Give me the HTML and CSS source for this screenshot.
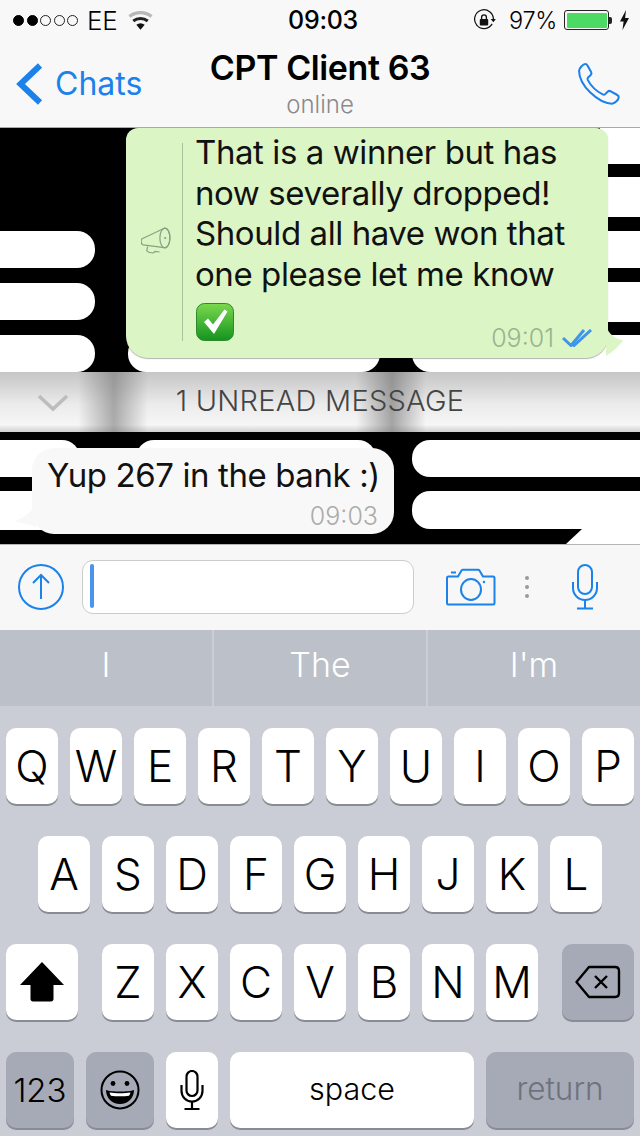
FILE: index.html
```html
<!DOCTYPE html>
<html lang="en">
<head>
<meta charset="utf-8">
<title>CPT Client 63</title>
<link rel="stylesheet" href="styles.css">
</head>
<body>
<div class="phone">
  <header class="top">
    <div class="status">
      <div class="status-left">
        <span class="signal"><i class="dot on"></i><i class="dot on"></i><i class="dot"></i><i class="dot"></i><i class="dot"></i></span>
        <span class="carrier">EE</span>
        <svg class="wifi" viewBox="0 0 24 18"><path d="M12 17l-3.600-4.400a6 6 0 0 1 7.200 0z" fill="#111"/><path d="M6.600 10.400a8.600 8.600 0 0 1 10.800 0l1.600-2a11.600 11.600 0 0 0-14 0z" fill="#222"/><path d="M3.400 6.600a13.800 13.800 0 0 1 17.200 0l1.700-2.100a16.600 16.600 0 0 0-20.600 0z" fill="#b8b8b8"/></svg>
      </div>
      <div class="clock">09:03</div>
      <div class="status-right">
        <svg class="rotlock" viewBox="0 0 24 24"><path d="M20.500 15.500A9.800 9.800 0 1 1 21.800 11" fill="none" stroke="#111" stroke-width="1.300"/><path d="M19 10.500h5.400l-2.700 3.400z" fill="#111"/><rect x="7.600" y="10.500" width="8.800" height="6.800" rx="1" fill="#111"/><path d="M9.500 10.500V8.600a2.500 2.500 0 0 1 5 0v1.900" fill="none" stroke="#111" stroke-width="1.400"/></svg>
        <span class="pct">97%</span>
        <span class="battery"><span class="battery-fill"></span></span>
        <span class="battery-cap"></span>
        <svg class="bolt" viewBox="0 0 10 20"><path d="M6.500 0L0.500 11.500h3.600L3 20l6.500-12H5.600z" fill="#111"/></svg>
      </div>
    </div>
    <nav class="nav">
      <div class="back">
        <svg class="chevron" viewBox="0 0 26 42"><path d="M23.500 2.500L4 21l19.500 18.500" fill="none" stroke="#1a82ea" stroke-width="6"/></svg>
        <span class="back-label">Chats</span>
      </div>
      <div class="title">
        <div class="name">CPT Client 63</div>
        <div class="presence">online</div>
      </div>
      <div class="call">
        <svg class="phone-icon" viewBox="0 0 44 42"><path d="M3 8.500c0-2.500 4-6.500 6-6.500 1.200 0 1.800.6 2.500 1.800l3.300 6c.7 1.300.3 2.200-.6 3.100l-2.400 2.300c-.7.700-.7 1.500-.2 2.500 2.800 5.200 8.500 11 14.500 14 1 .5 1.800.4 2.500-.3l2.300-2.300c.9-.9 1.900-1.200 3.100-.5l6 3.400c1.300.7 1.800 1.400 1.800 2.400 0 2.200-3.800 6.300-6.700 6.300C21.700 40.200 3 23 3 8.500z" fill="none" stroke="#1a82ea" stroke-width="2"/></svg>
      </div>
    </nav>
  </header>

  <main class="chat">
    <svg class="wallpaper" viewBox="0 128 640 416" preserveAspectRatio="none">
      <rect x="0" y="128" width="640" height="416" fill="#000"/>
      <g fill="#fff">
        <rect x="-40" y="231" width="135" height="37" rx="18"/>
        <rect x="-40" y="283" width="135" height="37" rx="18"/>
        <rect x="-40" y="335" width="135" height="37" rx="18"/>
        <rect x="128" y="335" width="252" height="37" rx="18"/>
        <rect x="412" y="335" width="300" height="37" rx="18"/>
        <rect x="600" y="128" width="100" height="36"/>
        <rect x="600" y="177" width="100" height="40"/>
        <rect x="600" y="231" width="100" height="37"/>
        <rect x="600" y="282" width="100" height="40"/>
        <rect x="-40" y="440" width="120" height="37" rx="18"/>
        <rect x="136" y="440" width="240" height="37" rx="18"/>
        <rect x="-40" y="491" width="400" height="39" rx="18"/>
        <rect x="412" y="440" width="300" height="37" rx="18"/>
        <rect x="412" y="491" width="300" height="38" rx="18"/>
        <path d="M582 529H640V544H566z"/>
      </g>
    </svg>

    <div class="msg-out">
      <div class="fwd">
        <svg class="megaphone" viewBox="1 1 27 25"><g fill="none" stroke="#8aa083" stroke-width="1.100"><path d="M2 11.500L22 2c3-.6 5 3.500 5 8.500s-2 9.500-5 9l-19-2.500C.8 16.500.8 12.500 2 11.500z"/><ellipse cx="22.500" cy="10.800" rx="4.500" ry="8.800"/><path d="M7 18.500l-.8 3.500c-.2 1.300 5.500 3 6.500 1.800l1-1 4 .6"/></g><circle cx="22.800" cy="10.800" r="1" fill="#8aa083"/></svg>
      </div>
      <div class="msg-body">
        <p class="msg-text">That is a winner but has<br>now severally dropped!<br>Should all have won that<br>one please let me know</p>
        <div class="msg-foot">
          <svg class="check-emoji" viewBox="0 0 38 38"><defs><linearGradient id="g" x1="0" y1="0" x2="0" y2="1"><stop offset="0" stop-color="#7ad94e"/><stop offset="1" stop-color="#15931f"/></linearGradient></defs><rect x="0.500" y="0.500" width="37" height="37" rx="8" fill="url(#g)" stroke="#2c8a2a"/><path d="M8 19l4-3.500 5 6L28.500 6.500l3 2L18 31z" fill="#fff"/></svg>
          <div class="meta">
            <span class="time-out">09:01</span>
            <svg class="ticks" viewBox="0 0 30 18"><path d="M1 9l8 7.500L22 1" fill="none" stroke="#3e95ea" stroke-width="3"/><path d="M10 14.500l2 2L29 1" fill="none" stroke="#3e95ea" stroke-width="3"/></svg>
          </div>
        </div>
      </div>
      <svg class="tail-out" viewBox="0 0 20 34"><path d="M0 0c1 7 6 14 17 16.500C14 21 7 28 0 32z" fill="#dcf5c5"/></svg>
    </div>

    <div class="unread">
      <svg class="unread-chevron" viewBox="0 0 32 18"><path d="M2 2l14 13L30 2" fill="none" stroke="#bdbdbd" stroke-width="3.600"/></svg>
      <span class="unread-label">1 UNREAD MESSAGE</span>
    </div>

    <div class="msg-in">
      <p class="in-text">Yup 267 in the bank :)</p>
      <div class="in-time">09:03</div>
      <svg class="tail-in" viewBox="0 0 22 26"><path d="M22 0C20 5 11 14 0 17c6 2 15 2 22 7z" fill="#f8f8f8"/></svg>
    </div>
  </main>

  <section class="composer">
    <svg class="attach" viewBox="0 0 46 46"><circle cx="23" cy="23" r="22" fill="none" stroke="#1a82ea" stroke-width="2"/><path d="M23 35V11M15 19l8-8 8 8" fill="none" stroke="#1a82ea" stroke-width="2"/></svg>
    <div class="input"><span class="caret"></span></div>
    <svg class="camera" viewBox="0 0 50 38"><g fill="none" stroke="#1a82ea" stroke-width="2"><path d="M1 10c0-1 .6-1.500 1.500-1.500H12l3.500-6c.4-.6.800-.8 1.500-.8h15c.7 0 1.200.2 1.500.8l3.500 6h10c1 0 1.500.5 1.500 1.500v25c0 1-.5 1.500-1.500 1.500h-45C1.500 36.500 1 36 1 35z"/><ellipse cx="25" cy="21.500" rx="10" ry="10.500"/></g><path d="M5 4.500h5" stroke="#1a82ea" stroke-width="2"/><circle cx="38" cy="14" r="1.200" fill="#1a82ea"/></svg>
    <div class="dots"><i></i><i></i><i></i></div>
    <svg class="mic-blue" viewBox="0 0 28 46"><g fill="none" stroke="#1a82ea" stroke-width="2"><rect x="7" y="1" width="14" height="29" rx="7"/><path d="M2 18v6a12 12 0 0 0 24 0v-6"/><path d="M14 36v8M6 44.500h16"/></g></svg>
  </section>

  <section class="suggest">
    <div class="sug">I</div>
    <div class="sug">The</div>
    <div class="sug">I'm</div>
  </section>

  <section class="keyboard">
    <div class="row">
      <div class="key">Q</div><div class="key">W</div><div class="key">E</div><div class="key">R</div><div class="key">T</div><div class="key">Y</div><div class="key">U</div><div class="key">I</div><div class="key">O</div><div class="key">P</div>
    </div>
    <div class="row">
      <div class="key">A</div><div class="key">S</div><div class="key">D</div><div class="key">F</div><div class="key">G</div><div class="key">H</div><div class="key">J</div><div class="key">K</div><div class="key">L</div>
    </div>
    <div class="row row-wide">
      <div class="key key-side"><svg class="shift" viewBox="0 0 44 40"><path d="M22 0L44 23H33.500V37c0 1.500-1 2.500-2.500 2.500H13c-1.500 0-2.500-1-2.500-2.500V23H0z" fill="#000"/></svg></div>
      <div class="letters">
        <div class="key">Z</div><div class="key">X</div><div class="key">C</div><div class="key">V</div><div class="key">B</div><div class="key">N</div><div class="key">M</div>
      </div>
      <div class="key key-side key-dark"><svg class="delete" viewBox="0 0 46 34"><path d="M14 2h26c2.500 0 4 1.500 4 4v22c0 2.500-1.500 4-4 4H14L1.500 17z" fill="none" stroke="#000" stroke-width="2.400" stroke-linejoin="round"/><path d="M20 11l12 12M32 11L20 23" stroke="#000" stroke-width="2.400"/></svg></div>
    </div>
    <div class="row row-bottom">
      <div class="key key-dark key-num">123</div>
      <div class="key key-dark key-emoji"><svg class="smile" viewBox="0 0 40 40"><circle cx="20" cy="20" r="18.500" fill="none" stroke="#000" stroke-width="2"/><circle cx="13" cy="13.500" r="2.400" fill="#000"/><circle cx="27" cy="13.500" r="2.400" fill="#000"/><path d="M6 20c5 2 23 2 28 0 0 8-6 14-14 14S6 28 6 20z" fill="#000"/><path d="M9.500 22.500c6 1 15 1 21 0-.5 1.500-1 2.500-1.500 3.200-5 .8-13 .8-18 0-.7-.8-1.200-2-1.500-3.200z" fill="#fff"/></svg></div>
      <div class="key"><svg class="mic-black" viewBox="0 0 24 40"><g fill="none" stroke="#000" stroke-width="2.200"><rect x="6.500" y="1" width="11" height="25" rx="5.500"/><path d="M1.500 15v6a10.500 10.500 0 0 0 21 0v-6"/><path d="M12 32v6M4.500 39h15"/></g></svg></div>
      <div class="key key-space"><span class="key-word">space</span></div>
      <div class="key key-dark key-return"><span class="key-word">return</span></div>
    </div>
  </section>
</div>
</body>
</html>
```

FILE: styles.css
```css
* { box-sizing: border-box; }
html, body { margin: 0; padding: 0; }
body { width: 640px; height: 1136px; overflow: hidden; font-family: Inter, "Liberation Sans", sans-serif; color: #000; }
p { margin: 0; }
.phone { width: 640px; height: 1136px; display: flex; flex-direction: column; }

.top { height: 128px; background: #f8f8f8; border-bottom: 1px solid #a9a9a9; flex: none; }
.status { height: 40px; display: grid; grid-template-columns: 1fr auto 1fr; align-items: center; font-size: 25px; letter-spacing: -0.3px; }
.status-left { display: flex; align-items: center; padding-left: 13px; }
.signal { display: flex; gap: 2.500px; margin-right: 9px; }
.dot { width: 11px; height: 11px; border-radius: 50%; border: 1px solid #222; }
.dot.on { background: #000; border-color: #000; }
.carrier { margin-right: 9px; font-size: 26px; font-weight: 300; }
.wifi { width: 29px; height: 21px; }
.clock { font-weight: 500; font-size: 25px; letter-spacing: -0.3px; padding-left: 6px; }
.status-right { display: flex; align-items: center; justify-content: flex-end; padding-right: 10px; }
.rotlock { width: 24px; height: 23px; margin-right: 13px; }
.pct { margin-right: 7px; font-size: 23.500px; font-weight: 300; }
.battery { width: 45px; height: 20px; border: 1px solid #222; border-radius: 3px; padding: 1.500px; display: flex; }
.battery-fill { flex: 1; background: #4cd964; border-radius: 1px; }
.battery-cap { width: 3px; height: 7px; background: #222; border-radius: 0 2px 2px 0; margin-right: 7px; }
.bolt { width: 11px; height: 20px; }

.nav { height: 87px; display: grid; grid-template-columns: 1fr auto 1fr; align-items: center; }
.back { display: flex; align-items: center; padding-left: 16px; }
.chevron { width: 27px; height: 42px; margin-right: 12px; }
.back-label { font-size: 32px; color: #1a82ea; letter-spacing: 0; }
.title { text-align: center; margin-top: -1px; }
.name { font-size: 34px; font-weight: 600; line-height: 42px; letter-spacing: -0.4px; }
.presence { font-size: 24px; line-height: 30px; color: #8a8a8a; margin-top: 1px; font-weight: 300; }
.call { display: flex; justify-content: flex-end; padding-right: 19px; }
.phone-icon { width: 45px; height: 43px; }

.chat { position: relative; height: 416px; flex: none; overflow: hidden; display: flex; flex-direction: column; }
.wallpaper { position: absolute; inset: 0; width: 640px; height: 416px; }

.msg-out { position: relative; margin-left: 126px; width: 482px; height: 230px; background: #dcf5c5; border-radius: 12px 12px 22px 22px; box-shadow: 0 1px 1px rgba(0,0,0,.3); display: flex; padding-top: 4px; flex: none; }
.fwd { width: 57px; height: 198px; margin-top: 11px; border-right: 1px solid #a9c09f; display: flex; align-items: center; justify-content: center; flex: none; }
.megaphone { width: 30px; height: 28px; margin: -2px 0 0 3px; }
.msg-body { margin-left: 12px; flex: 1; }
.msg-text { font-size: 33px; line-height: 40.700px; letter-spacing: -0.42px; color: #111; }
.msg-foot { display: flex; justify-content: space-between; align-items: flex-end; margin-top: 8px; padding-right: 16px; }
.check-emoji { width: 38px; height: 38px; margin-left: 1px; }
.meta { display: flex; align-items: center; gap: 8px; margin-bottom: -12px; }
.time-out { font-size: 25px; color: #9ab38f; font-weight: 300; }
.ticks { width: 30px; height: 18px; }
.tail-out { position: absolute; right: -18px; bottom: 0; width: 20px; height: 34px; }

.unread { height: 60px; margin-top: 14px; flex: none; position: relative; display: flex; align-items: center; justify-content: center;
  background:
    linear-gradient(to right, transparent 78px, rgba(110,110,110,.55) 114px, transparent 148px, transparent 356px, rgba(110,110,110,.6) 392px, transparent 426px),
    linear-gradient(to bottom, #c6c6c6 0, #d4d4d4 22%, #ececec 55%, #f6f6f6 88%, #cfcfcf 100%); }
.unread-chevron { position: absolute; left: 37px; top: 22px; width: 32px; height: 18px; }
.unread-label { font-size: 29px; color: #444; font-weight: 300; margin-top: -4px; letter-spacing: 0.25px; }

.msg-in { position: relative; margin: 16px 0 0 32px; width: 362px; height: 86px; background: #f8f8f8; border-radius: 22px; padding: 7px 16px 0 15px; flex: none; }
.in-text { font-size: 33px; line-height: 40px; color: #111; white-space: nowrap; letter-spacing: -0.4px; }
.in-time { font-size: 25px; line-height: 30px; color: #ababab; text-align: right; margin-top: 6px; font-weight: 300; }
.tail-in { position: absolute; left: -18px; bottom: 4px; width: 22px; height: 26px; }

.composer { height: 86px; flex: none; background: #f7f7f7; border-top: 1px solid #b5b5b5; display: flex; align-items: center; padding: 0 0 1px 18px; }
.attach { width: 46px; height: 46px; margin-right: 18px; }
.input { width: 332px; height: 54px; background: #fff; border: 1px solid #ccc; border-radius: 11px; margin-right: 32px; padding: 3px 7px; }
.caret { display: block; width: 4px; height: 44px; background: #4a94ee; border-radius: 2px; }
.camera { width: 50px; height: 38px; margin-right: 29px; }
.dots { display: flex; flex-direction: column; gap: 5px; margin-right: 42px; }
.dots i { display: block; width: 4px; height: 4px; border-radius: 50%; background: #9a9a9a; }
.mic-blue { width: 28px; height: 46px; }

.suggest { height: 76px; flex: none; background: #bbc0c9; display: flex; gap: 2px; }
.sug { flex: 1; display: flex; align-items: center; justify-content: center; color: #fff; font-size: 34px; font-weight: 300; padding-bottom: 8px; }
.sug + .sug { box-shadow: -2px 0 0 #cbced6; }

.keyboard { flex: 1; background: #cacdd5; padding-top: 22px; display: flex; flex-direction: column; gap: 32px; }
.row { display: flex; justify-content: center; gap: 12px; }
.row-wide { justify-content: space-between; padding: 0 6px; }
.row-bottom { padding: 0 6px; justify-content: flex-start; }
.letters { display: flex; gap: 12px; }
.key { width: 52px; height: 76px; background: #fff; border-radius: 10px; box-shadow: 0 2px 0 #888c96; display: flex; align-items: center; justify-content: center; font-size: 44px; font-weight: 300; color: #000; flex: none; }
.key-side { width: 72px; }
.key-dark { background: #a5aab6; }
.key-num { width: 68px; font-size: 33px; }
.key-emoji { width: 68px; }
.key-space { width: 244px; font-size: 30.500px; }
.key-return { width: 148px; font-size: 31.500px; color: #6e727c; }
.key-word { margin-top: -4px; }
.shift { width: 44px; height: 40px; }
.delete { width: 46px; height: 34px; }
.smile { width: 40px; height: 40px; }
.mic-black { width: 24px; height: 40px; }
```
